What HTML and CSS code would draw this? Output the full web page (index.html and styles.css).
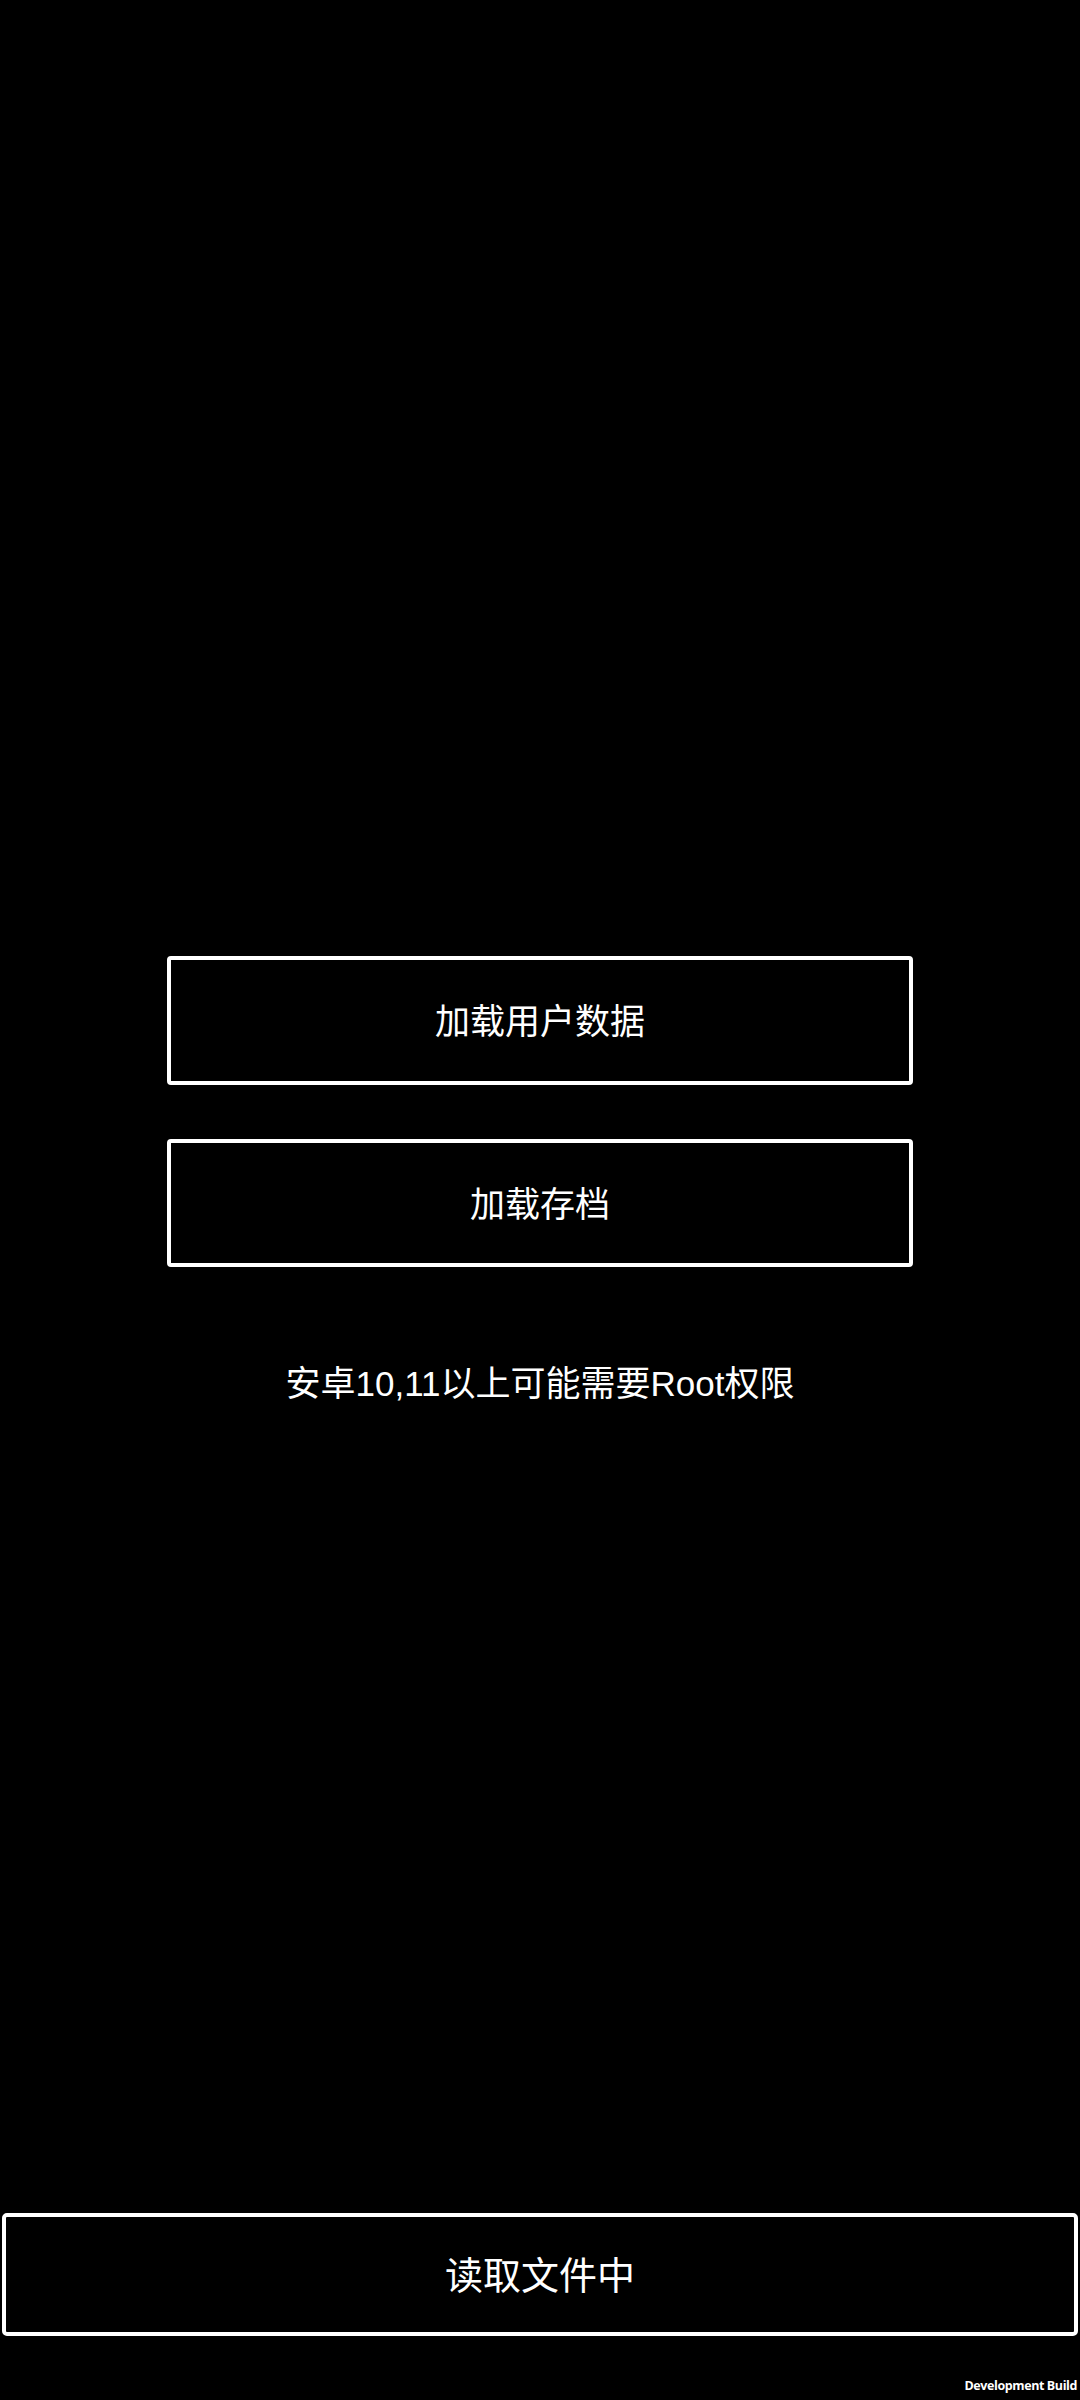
FILE: index.html
```html
<!DOCTYPE html>
<html lang="zh-CN">
<head>
<meta charset="utf-8">
<title>加载</title>
<link rel="stylesheet" href="styles.css">
</head>
<body>
<div class="screen">
  <div class="menu">
    <div class="btn">加载用户数据</div>
    <div class="btn">加载存档</div>
    <div class="note">安卓10,11以上可能需要Root权限</div>
  </div>
  <div class="status">读取文件中</div>
  <div class="build">Development Build</div>
</div>
</body>
</html>
```
FILE: styles.css
```css
html, body {
  margin: 0;
  padding: 0;
  background: #000;
}
.screen {
  width: 1080px;
  height: 2400px;
  display: flex;
  flex-direction: column;
  align-items: center;
  color: #fff;
  font-family: "Liberation Sans", "Noto Sans CJK SC", sans-serif;
  box-sizing: border-box;
}
.menu {
  margin-top: 956px;
  display: flex;
  flex-direction: column;
  align-items: center;
  gap: 54px;
}
.btn {
  width: 746px;
  height: 129px;
  box-sizing: border-box;
  border: 4.5px solid #fff;
  border-radius: 4px;
  display: flex;
  align-items: center;
  justify-content: center;
  padding-bottom: 4px;
  font-size: 35px;
  font-family: "Noto Sans CJK SC", sans-serif;
}
.btn + .btn {
  height: 128px;
}
.note {
  margin-top: 43px;
  font-size: 35px;
  line-height: 40px;
}
.status {
  margin-top: auto;
  width: 1076px;
  height: 123px;
  box-sizing: border-box;
  border: 4.5px solid #fff;
  border-radius: 5px;
  display: flex;
  align-items: center;
  justify-content: center;
  padding-bottom: 4px;
  font-size: 38px;
  font-family: "Noto Sans CJK SC", sans-serif;
}
.build {
  align-self: flex-end;
  margin: 42px 3px 0 0;
  font-family: "Open Sans", sans-serif;
  font-weight: 700;
  font-size: 12.5px;
  line-height: 16px;
  letter-spacing: -0.4px;
  height: 22px;
}
```
